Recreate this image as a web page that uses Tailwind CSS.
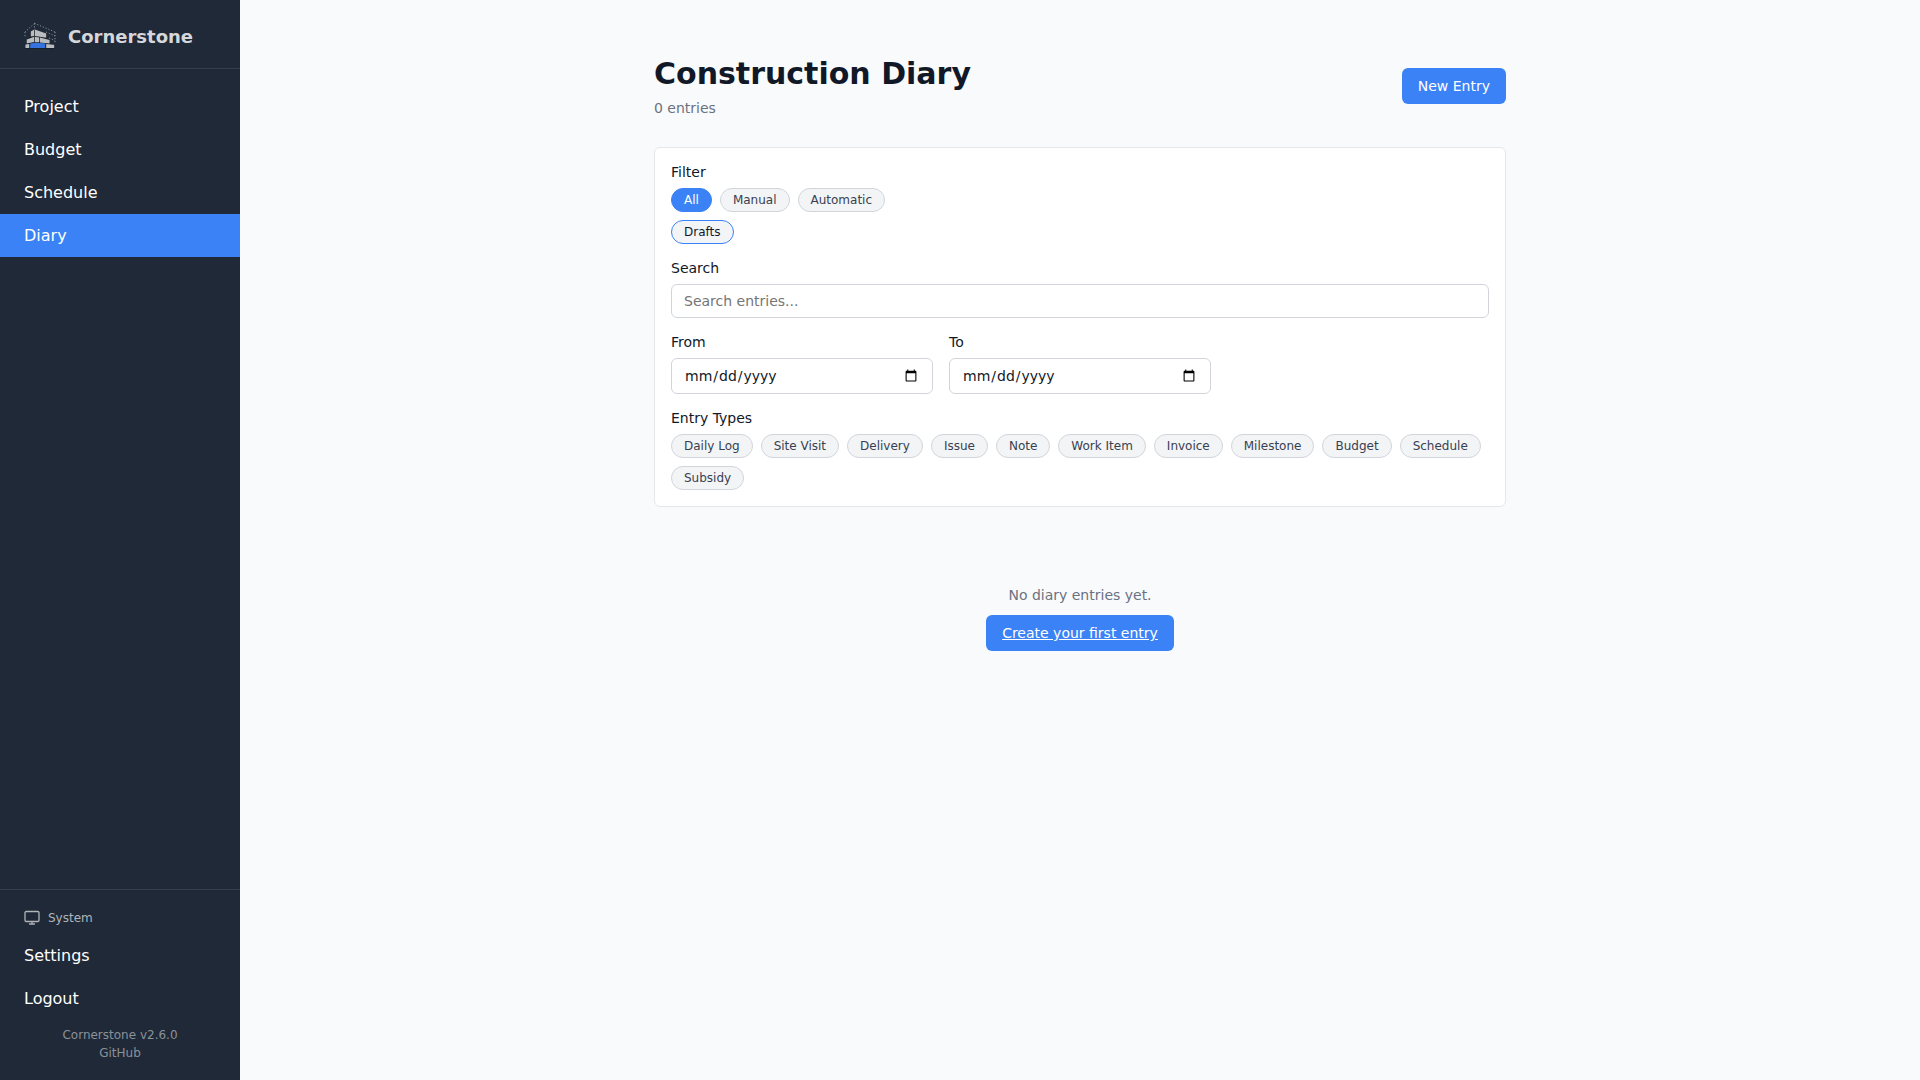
<!DOCTYPE html>
<html lang="en">
<head>
<meta charset="utf-8">
<meta name="viewport" content="width=device-width, initial-scale=1">
<title>Construction Diary - Cornerstone</title>
<script src="https://cdn.jsdelivr.net/npm/@tailwindcss/browser@4"></script>
</head>
<body class="flex min-h-screen bg-gray-50 font-['DejaVu_Sans',sans-serif] text-[#111827]">
  <aside class="flex w-60 shrink-0 flex-col bg-[#1f2937] text-white">
    <div class="flex items-center gap-3 border-b border-[#353e4b] px-6 pt-5 pb-4">
      <svg class="size-8" viewBox="0 0 32 32" aria-hidden="true">
        <g fill="none" stroke="#8b929c" stroke-width="1" stroke-dasharray="1.2 1.8">
          <path d="M10.5 3.3 L1 12"/>
          <path d="M10.5 3.3 L31 12"/>
          <path d="M10.5 3.3 V10"/>
          <path d="M1 12 V17"/>
          <path d="M22 12 L31 16"/>
          <path d="M25 18 L31 20.500"/>
          <path d="M31 12 V24"/>
        </g>
        <path fill="#16191e" d="M10.500 9.500 L22.500 13.500 V18.500 L26 20 V23.500 L30.500 24.500 V28.500 H1 V24.500 L2.500 23 V19.500 L6.500 17 V12 Z"/>
        <g fill="#b9bcc0">
          <path d="M6.800 11.600 L10.200 9.600 V16 L6.800 16.600 Z"/>
          <path d="M10.900 9.600 L22.200 13.400 V17.800 L10.900 16 Z"/>
          <path d="M2.700 19.400 L10.200 16.800 V22 L2.700 23.600 Z"/>
          <path d="M10.900 16.800 L15.300 17.400 V22.200 H10.900 Z"/>
          <path d="M16 17.500 L25.600 20.100 V23.500 L16 22.400 Z"/>
          <path d="M1.400 24.600 L5.300 24 V28 H1.400 Z"/>
          <path d="M22.200 24 L30.200 24.800 V28 H22.200 Z"/>
        </g>
        <path fill="#3473dd" d="M6.200 23.400 L10.500 22.700 L21.300 23.200 V28 H6.200 Z"/>
      </svg>
      <span class="pt-0.5 text-[18px] leading-[30px] font-bold text-[#d5d7da]">Cornerstone</span>
    </div>
    <nav class="flex flex-col pt-4 text-base leading-[19px]" aria-label="Main">
      <a href="#" class="px-6 py-3">Project</a>
      <a href="#" class="px-6 py-3">Budget</a>
      <a href="#" class="px-6 py-3">Schedule</a>
      <a href="#" class="bg-[#3b82f6] px-6 py-3" aria-current="page">Diary</a>
    </nav>
    <div class="mt-auto flex flex-col border-t border-[#353e4b] pt-4 pb-[18px] text-base leading-[19px]">
      <button type="button" class="mb-1 flex items-center gap-2 px-6 text-xs leading-6 text-[#b1b4b9]">
        <svg class="size-4" viewBox="0 0 16 16" fill="none" stroke="currentColor" stroke-width="1.300" stroke-linecap="round" aria-hidden="true">
          <rect x="1" y="1.500" width="14" height="10" rx="1.200"/>
          <path d="M8 11.500 V14 M5.500 14 H10.500"/>
        </svg>
        System
      </button>
      <a href="#" class="px-6 py-3">Settings</a>
      <button type="button" class="px-6 py-3 text-left">Logout</button>
      <div class="flex flex-col items-center pt-1.5 text-xs leading-[18px] text-[#8b919a]">
        <span>Cornerstone v2.6.0</span>
        <a href="#">GitHub</a>
      </div>
    </div>
  </aside>

  <main class="min-w-0 flex-1 bg-[#f9fafb] p-6">
    <div class="mx-auto max-w-[900px] p-6">
      <header class="mb-6 flex items-center justify-between">
        <div class="pt-0.5 pb-[5px]">
          <h1 class="text-[30px] leading-[48px] font-bold">Construction Diary</h1>
          <p class="text-sm leading-5 text-gray-500">0 entries</p>
        </div>
        <button type="button" class="rounded-md bg-[#3b82f6] px-4 py-2.5 text-sm leading-4 text-white">New Entry</button>
      </header>

      <form class="flex flex-col gap-4 rounded-md border border-[#e5e7eb] bg-white p-4 text-sm leading-4">
        <div class="flex flex-col gap-2" role="group" aria-labelledby="filter-label">
          <span id="filter-label">Filter</span>
          <div class="flex flex-wrap gap-2 text-xs leading-3.5 text-[#374151]">
            <button type="button" class="rounded-full border border-[#3b82f6] bg-[#3b82f6] px-3 py-1 text-white">All</button>
            <button type="button" class="rounded-full border border-[#d1d5db] bg-[#f3f4f6] px-3 py-1">Manual</button>
            <button type="button" class="rounded-full border border-[#d1d5db] bg-[#f3f4f6] px-3 py-1">Automatic</button>
          </div>
          <div class="flex text-xs leading-3.5">
            <button type="button" class="rounded-full border border-[#3b82f6] bg-[#f3f4f6] px-3 py-1">Drafts</button>
          </div>
        </div>
        <div class="flex flex-col gap-2">
          <label for="search">Search</label>
          <input id="search" type="search" placeholder="Search entries..." class="w-full rounded-md border border-[#d1d5db] bg-white px-3 py-2 placeholder:text-[#757575]">
        </div>
        <div class="grid grid-cols-3 gap-4">
          <div class="flex flex-col gap-2">
            <label for="from">From</label>
            <input id="from" type="date" class="h-9 w-full rounded-md border border-[#d1d5db] bg-white px-3">
          </div>
          <div class="flex flex-col gap-2">
            <label for="to">To</label>
            <input id="to" type="date" class="h-9 w-full rounded-md border border-[#d1d5db] bg-white px-3">
          </div>
        </div>
        <div class="flex flex-col gap-2" role="group" aria-labelledby="types-label">
          <span id="types-label">Entry Types</span>
          <div class="flex flex-wrap gap-2 text-xs leading-3.5 text-[#374151]">
            <button type="button" class="rounded-full border border-[#d1d5db] bg-[#f3f4f6] px-3 py-1">Daily Log</button>
            <button type="button" class="rounded-full border border-[#d1d5db] bg-[#f3f4f6] px-3 py-1">Site Visit</button>
            <button type="button" class="rounded-full border border-[#d1d5db] bg-[#f3f4f6] px-3 py-1">Delivery</button>
            <button type="button" class="rounded-full border border-[#d1d5db] bg-[#f3f4f6] px-3 py-1">Issue</button>
            <button type="button" class="rounded-full border border-[#d1d5db] bg-[#f3f4f6] px-3 py-1">Note</button>
            <button type="button" class="rounded-full border border-[#d1d5db] bg-[#f3f4f6] px-3 py-1">Work Item</button>
            <button type="button" class="rounded-full border border-[#d1d5db] bg-[#f3f4f6] px-3 py-1">Invoice</button>
            <button type="button" class="rounded-full border border-[#d1d5db] bg-[#f3f4f6] px-3 py-1">Milestone</button>
            <button type="button" class="rounded-full border border-[#d1d5db] bg-[#f3f4f6] px-3 py-1">Budget</button>
            <button type="button" class="rounded-full border border-[#d1d5db] bg-[#f3f4f6] px-3 py-1">Schedule</button>
            <button type="button" class="rounded-full border border-[#d1d5db] bg-[#f3f4f6] px-3 py-1">Subsidy</button>
          </div>
        </div>
      </form>

      <section class="flex flex-col items-center gap-3 pt-20 text-sm leading-4">
        <p class="text-gray-500">No diary entries yet.</p>
        <a href="#" class="rounded-md bg-[#3b82f6] px-4 py-2.5 text-white underline">Create your first entry</a>
      </section>
    </div>
  </main>
</body>
</html>
